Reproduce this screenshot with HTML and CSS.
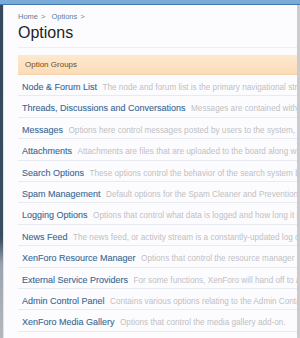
FILE: index.html
```html
<!DOCTYPE html>
<html>
<head>
<meta charset="utf-8">
<link rel="stylesheet" href="styles.css">
</head>
<body>
<div class="topbar"></div>
<div class="frame">
  <div class="leftedge"></div>
  <div class="main">
    <div class="titlebar">
      <div class="crumbs"><a class="crumb">Home</a><span class="arrow">&gt;</span><a class="crumb">Options</a><span class="arrow">&gt;</span></div>
      <h1 class="title">Options</h1>
    </div>
    <div class="list">
      <div class="listhead">Option Groups</div>
      <div class="row"><a class="name">Node &amp; Forum List</a> <span class="desc">The node and forum list is the primary navigational structure of your forum.</span></div>
      <div class="row"><a class="name">Threads, Discussions and Conversations</a> <span class="desc">Messages are contained within a thread or conversation.</span></div>
      <div class="row"><a class="name">Messages</a> <span class="desc">Options here control messages posted by users to the system, including posts.</span></div>
      <div class="row"><a class="name">Attachments</a> <span class="desc">Attachments are files that are uploaded to the board along with messages.</span></div>
      <div class="row"><a class="name">Search Options</a> <span class="desc">These options control the behavior of the search system built into XenForo.</span></div>
      <div class="row"><a class="name">Spam Management</a> <span class="desc">Default options for the Spam Cleaner and Prevention system.</span></div>
      <div class="row"><a class="name">Logging Options</a> <span class="desc">Options that control what data is logged and how long it is maintained.</span></div>
      <div class="row"><a class="name">News Feed</a> <span class="desc">The news feed, or activity stream is a constantly-updated log of the actions.</span></div>
      <div class="row"><a class="name">XenForo Resource Manager</a> <span class="desc">Options that control the resource manager add-on.</span></div>
      <div class="row"><a class="name">External Service Providers</a> <span class="desc">For some functions, XenForo will hand off to a third-party service.</span></div>
      <div class="row"><a class="name">Admin Control Panel</a> <span class="desc">Contains various options relating to the Admin Control Panel.</span></div>
      <div class="row"><a class="name">XenForo Media Gallery</a> <span class="desc">Options that control the media gallery add-on.</span></div>
    </div>
  </div>
  <div class="rightedge"></div>
</div>
</body>
</html>
```
FILE: styles.css
```css
html, body {
  margin: 0;
  padding: 0;
}
body {
  width: 300px;
  height: 338px;
  overflow: hidden;
  background: #fcfcfe;
  font-family: "Liberation Sans", Arial, sans-serif;
}
.topbar {
  height: 4px;
  background: #7aabd8;
  border-bottom: 1px solid #3f77ae;
}
.frame {
  display: flex;
  height: 333px;
}
.leftedge {
  width: 3px;
  flex: none;
  background: linear-gradient(#34495d 0%, #3a4e62 70%, #9aa3ad 78%, #b4b8bd 100%);
  border-right: 1px solid #dfe3ea;
}
.rightedge {
  width: 3px;
  flex: none;
  background: #cbcbcd;
}
.main {
  flex: 1;
  min-width: 0;
  padding-left: 14px;
  overflow: hidden;
}
.titlebar {
  padding-top: 6px;
  padding-bottom: 4px;
  border-bottom: 1px solid #eceef5;
}
.crumbs {
  font-size: 7.5px;
  line-height: 12px;
  color: #5b7d9c;
  white-space: nowrap;
}
.crumb {
  color: #5b7d9c;
}
.arrow {
  margin: 0 6px 0 3px;
  color: #6a7f93;
}
.title {
  margin: 0;
  font-size: 16px;
  line-height: 20px;
  font-weight: normal;
  color: #1f2327;
}
.list {
  margin-top: 7px;
}
.listhead {
  height: 19px;
  line-height: 19px;
  padding-left: 7px;
  font-size: 8px;
  color: #6f4a22;
  background: linear-gradient(#fde9cf, #fbdcb8);
  border-bottom: 1px solid #f6d2a8;
  white-space: nowrap;
}
.row {
  height: 20.4px;
  line-height: 20.4px;
  border-bottom: 1px solid #e7eaf0;
  padding-left: 4px;
  white-space: nowrap;
  overflow: hidden;
}
.name {
  font-size: 9px;
  color: #3a6893;
  -webkit-text-stroke: 0.1px #3a6893;
}
.desc {
  font-size: 8.2px;
  color: #c0c0c4;
  margin-left: 1px;
}
```
